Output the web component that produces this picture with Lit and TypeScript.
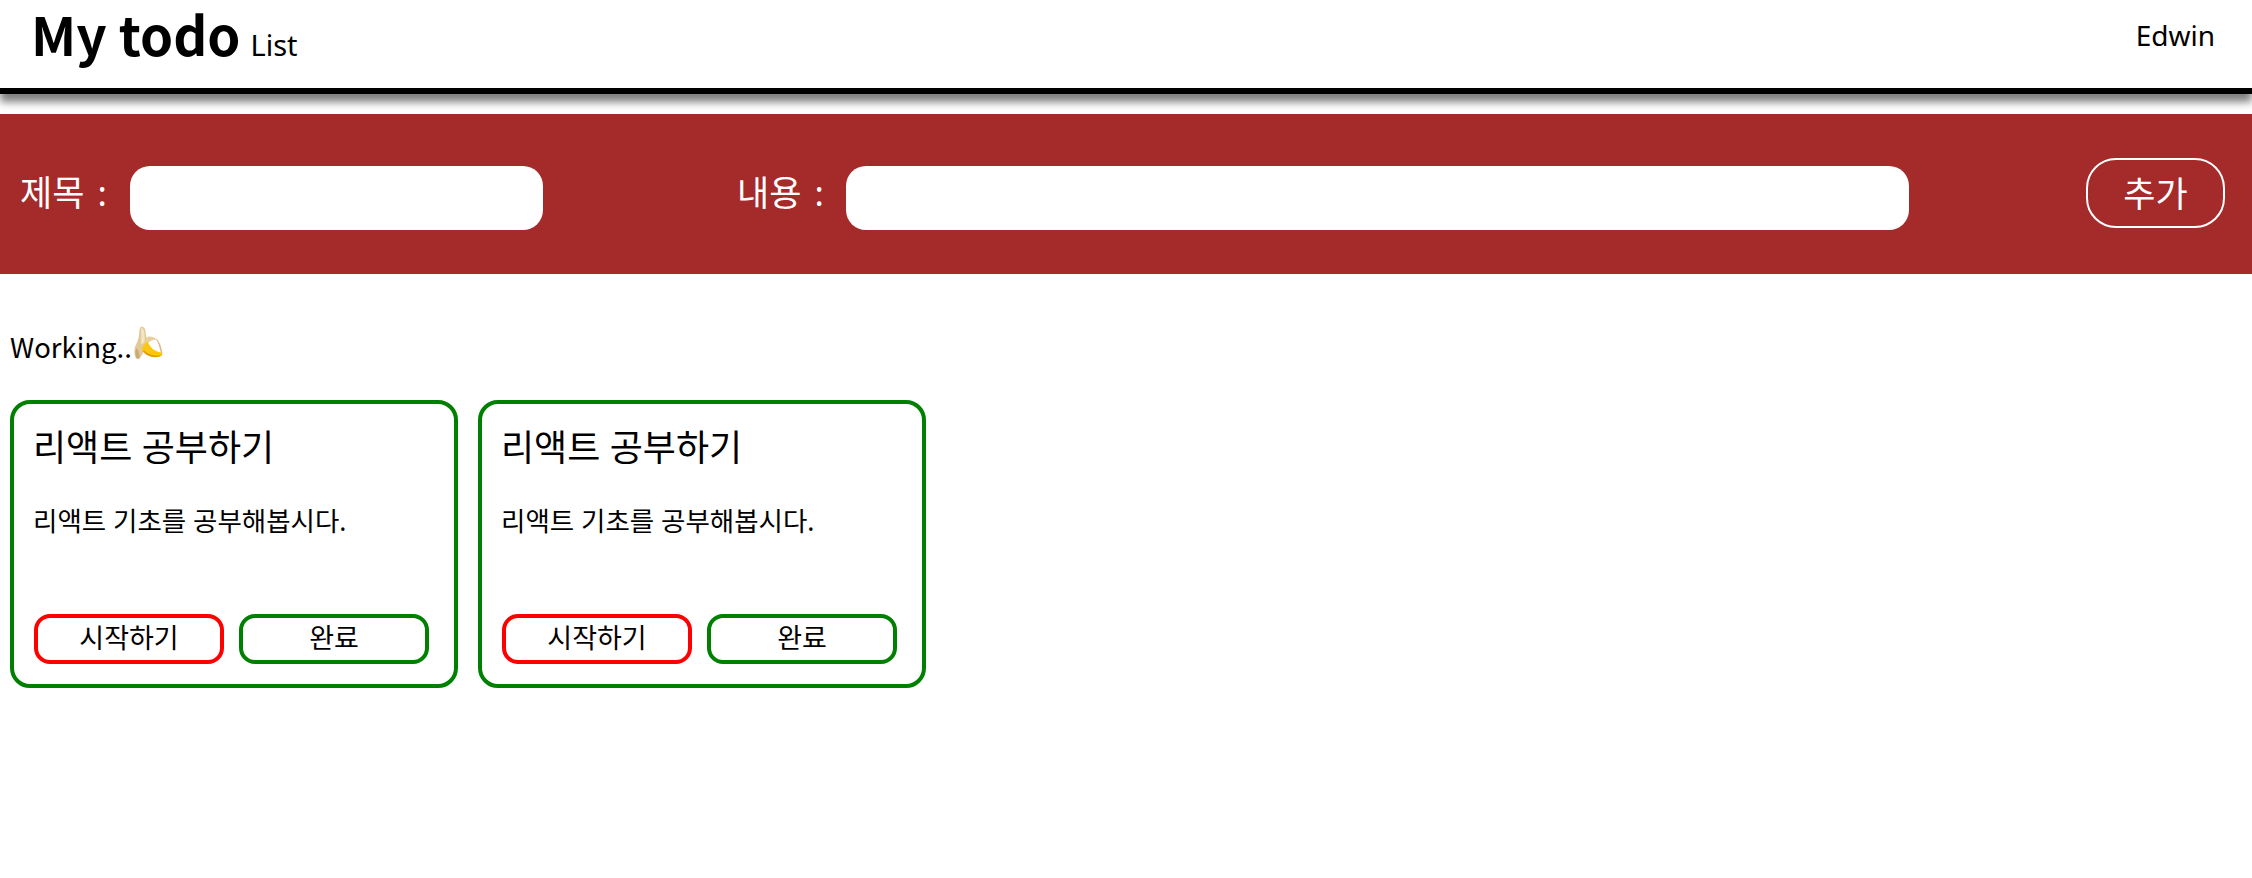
import { LitElement, html, css, type TemplateResult } from 'lit'
import { customElement } from 'lit/decorators.js'

interface Todo {
  title: string
  body: string
}

const todos: Todo[] = [
  { title: '리액트 공부하기', body: '리액트 기초를 공부해봅시다.' },
  { title: '리액트 공부하기', body: '리액트 기초를 공부해봅시다.' }
]

const banana = html`
  <svg class="banana" viewBox="0 0 28 32" aria-hidden="true">
    <path d="M7 1C9 0 11 1 11.500 4C12 8 12.500 11 13 13C12 19 10 26 6 30.500C4 31.500 2.500 31 2 29C1 26 1 23 1.500 20.500C3 17 5 13 5.500 9C5.800 5 6 2 7 1Z" fill="#e3c995"/>
    <path d="M7.500 2C9 1.500 10 3 10.500 6C11 10 11 13 10.500 16L7.500 17C8 12 7.500 6 7.500 2Z" fill="#f3e6c6"/>
    <path d="M3 21C5 22 6 25 6 30C4 31 3 30.500 2.500 28.500C2 26 2 23 3 21Z" fill="#c9ab78"/>
    <path d="M12 11C15 9 19 9.500 22 12.500C20 13 17 13.500 14.500 15.500Z" fill="#e6cf9c"/>
    <path d="M13.500 13.500C15 19 19 24 27 25C27.800 25.500 27.800 27.200 27 27.800C22 31 13 29 9 23.500C8.500 22.500 8.500 21 9 20C10.500 18 12.300 16 13.500 13.500Z" fill="#fbc80f"/>
    <path d="M10.500 23C14 27 21 28.500 27 27.500C22 31 13 29 9 23.500Z" fill="#e29c08"/>
    <path d="M21 11.500C24 13 26.500 18 27.300 24.500C27.500 25.500 26.800 25.800 26 25C25 20 23.500 15 21 11.500Z" fill="#d9bd84"/>
  </svg>
`

@customElement('app-root')
export class AppRoot extends LitElement {
  static styles = css`
    :host {
      display: block;
      min-height: 878px;
      background: #fff;
      color: #000;
      font-family: 'Noto Sans', 'Noto Sans CJK KR', sans-serif;
    }

    .header {
      display: flex;
      justify-content: space-between;
      align-items: flex-start;
      box-sizing: border-box;
      height: 94px;
      padding: 0 37px 0 31px;
      border-bottom: 6px solid #000;
      box-shadow: 0 8px 8px rgba(0, 0, 0, 0.5);
    }

    .brand {
      display: flex;
      align-items: baseline;
      gap: 10px;
    }

    .brand b {
      font-family: 'Noto Sans CJK KR', sans-serif;
      font-size: 53px;
      line-height: 66px;
      font-weight: 700;
    }

    .brand span {
      font-size: 29px;
    }

    .user {
      font-size: 28px;
      line-height: 38px;
      margin-top: 16px;
    }

    .form {
      display: flex;
      align-items: center;
      box-sizing: border-box;
      height: 160px;
      margin-top: 20px;
      padding: 0 27px 0 20px;
      background: #a52a2a;
      color: #fff;
    }

    .form label {
      font-size: 35px;
      line-height: 48px;
      white-space: nowrap;
      word-spacing: 4px;
      margin-top: -2px;
    }

    .form input {
      box-sizing: border-box;
      height: 64px;
      border: 0;
      border-radius: 20px;
      background: #fff;
      flex: none;
      margin-top: 8px;
    }

    .title-label {
      width: 110px;
    }

    .title-input {
      width: 413px;
    }

    .body-label {
      width: 109px;
      margin-left: 194px;
    }

    .body-input {
      width: 1063px;
    }

    .add {
      box-sizing: border-box;
      width: 139px;
      height: 70px;
      margin-left: auto;
      margin-top: -2px;
      border: 2px solid #fff;
      border-radius: 30px;
      background: transparent;
      color: #fff;
      font: inherit;
      font-size: 35px;
      line-height: 1;
    }

    .list {
      padding: 0 10px;
    }

    .list h2 {
      display: flex;
      align-items: center;
      height: 40px;
      margin: 52px 0 0;
      font-family: 'Noto Sans CJK KR', sans-serif;
      font-size: 27.500px;
      font-weight: 400;
    }

    .banana {
      width: 30px;
      height: 34px;
      margin: -6px 0 0 1px;
    }

    .cards {
      display: flex;
      gap: 20px;
      margin-top: 34px;
    }

    .card {
      display: flex;
      flex-direction: column;
      box-sizing: border-box;
      width: 448px;
      height: 288px;
      padding: 19px 24px 20px 19px;
      border: 4px solid #008000;
      border-radius: 20px;
    }

    .card h3 {
      margin: 0;
      font-size: 36px;
      line-height: 50px;
      font-weight: 400;
    }

    .card p {
      margin: 30px 0 0;
      font-size: 26.500px;
      line-height: 36px;
    }

    .actions {
      display: flex;
      gap: 15px;
      margin: auto 0 0 1px;
    }

    .actions button {
      box-sizing: border-box;
      width: 190px;
      height: 50px;
      padding: 0 0 4px;
      border-radius: 16px;
      background: #fff;
      color: #000;
      font: inherit;
      font-size: 27px;
      line-height: 1;
    }

    .start {
      border: 4px solid #f00;
    }

    .done {
      border: 4px solid #008000;
    }
  `

  private renderCard (todo: Todo): TemplateResult {
    return html`
      <div class="card">
        <h3>${todo.title}</h3>
        <p>${todo.body}</p>
        <div class="actions">
          <button class="start">시작하기</button>
          <button class="done">완료</button>
        </div>
      </div>
    `
  }

  render (): TemplateResult {
    return html`
      <div class="header">
        <div class="brand"><b>My todo</b><span>List</span></div>
        <div class="user">Edwin</div>
      </div>
      <div class="form">
        <label class="title-label">제목 :</label>
        <input class="title-input" type="text">
        <label class="body-label">내용 :</label>
        <input class="body-input" type="text">
        <button class="add">추가</button>
      </div>
      <div class="list">
        <h2>Working..${banana}</h2>
        <div class="cards">${todos.map(todo => this.renderCard(todo))}</div>
      </div>
    `
  }
}
